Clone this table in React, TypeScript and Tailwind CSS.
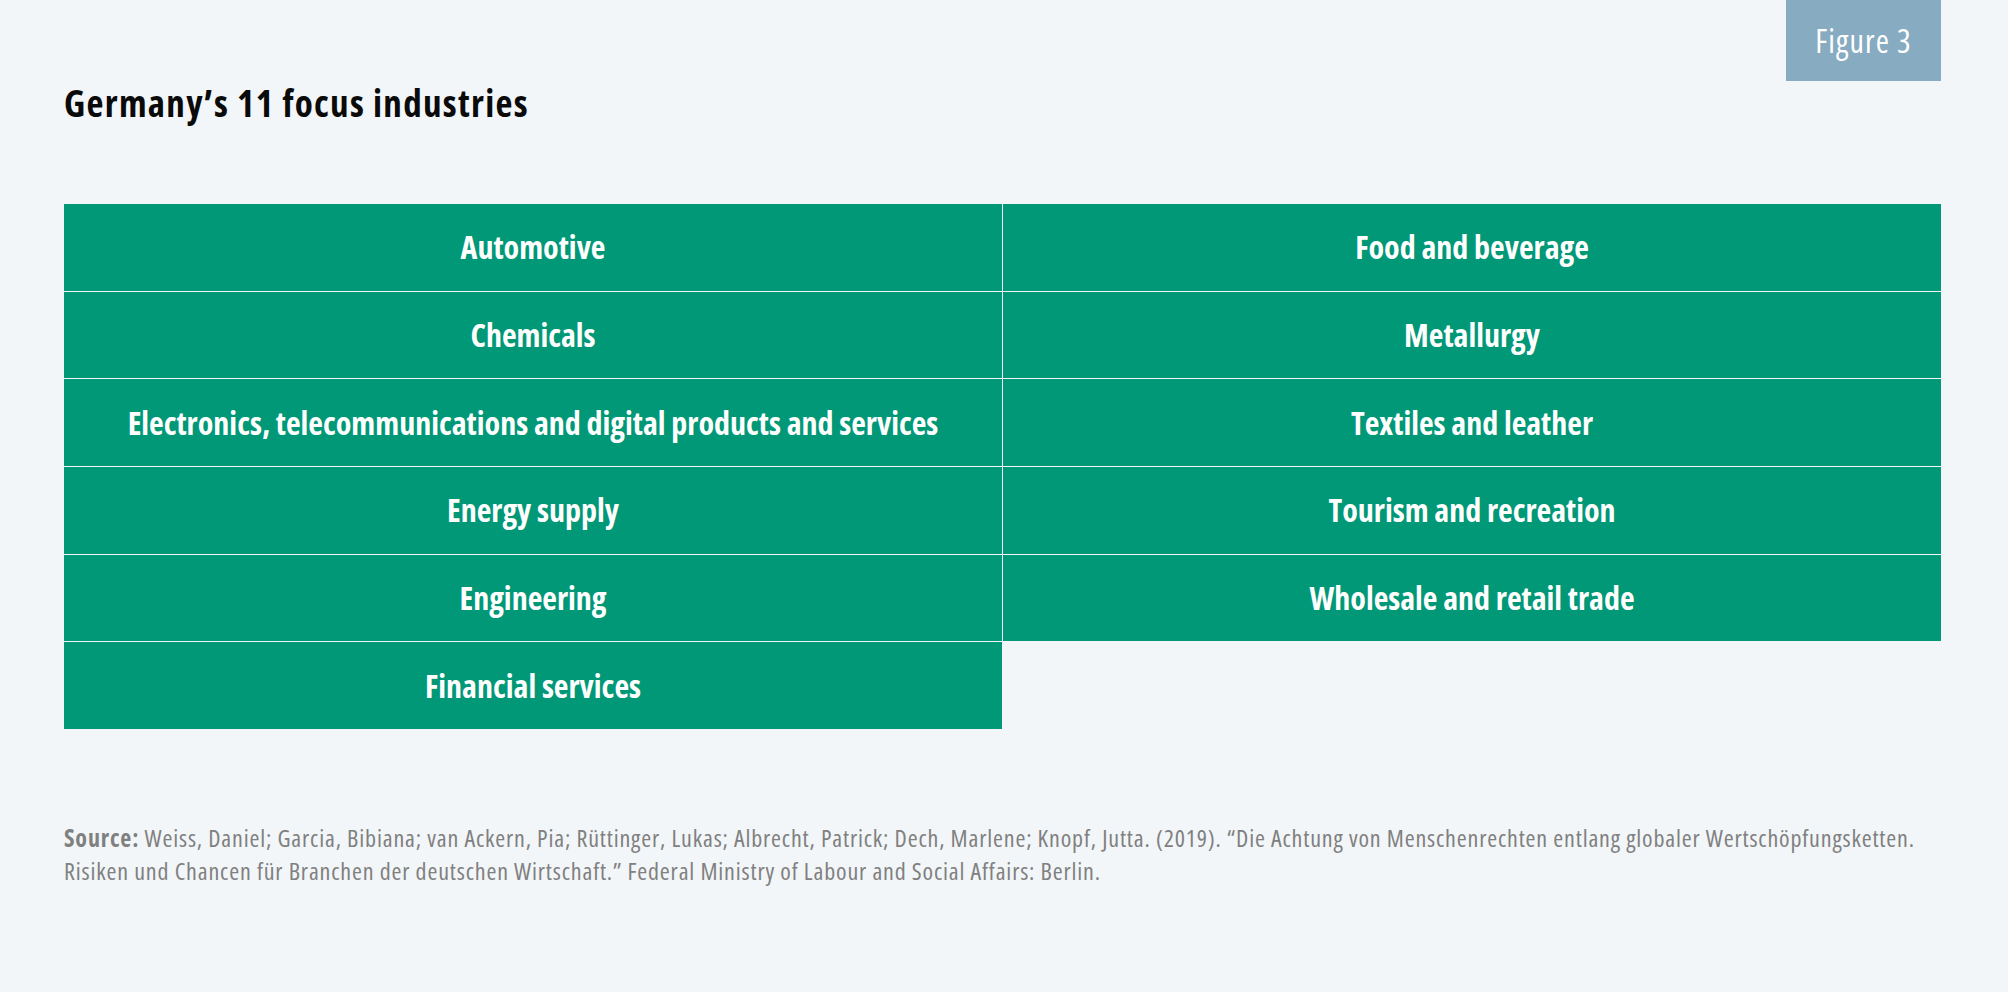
import React from 'react';

// two columns of the figure, read top to bottom
const leftColumn = [
  'Automotive',
  'Chemicals',
  'Electronics, telecommunications and digital products and services',
  'Energy supply',
  'Engineering',
  'Financial services',
];
const rightColumn = [
  'Food and beverage',
  'Metallurgy',
  'Textiles and leather',
  'Tourism and recreation',
  'Wholesale and retail trade',
];

export default function App() {
  // interleave so the grid fills row by row
  const cells: (string | null)[] = [];
  for (let i = 0; i < leftColumn.length; i++) {
    cells.push(leftColumn[i]);
    cells.push(rightColumn[i] ?? null);
  }

  return (
    <div className="w-[2008px] h-[992px] bg-[#f2f6f9] overflow-hidden font-['Open_Sans',sans-serif] [font-stretch:condensed]">
      {/* Figure badge */}
      <div className="flex justify-end pr-[67px]">
        <div className="w-[155px] h-[81px] bg-[#87abc0] flex items-center justify-center text-white text-[32px] tracking-[1.1px]">
          Figure 3
        </div>
      </div>

      <div className="px-[64px]">
        <h1 className="mt-[2px] text-[37px] leading-[40px] font-bold text-[#0a0a0a] tracking-[1.3px]">
          Germany’s 11 focus industries
        </h1>

        {/* Industries table */}
        <div className="mt-[81px] w-[1877px] grid grid-cols-2 gap-px">
          {cells.map((label, i) =>
            label ? (
              <div
                key={i}
                className="h-[86.7px] bg-[#009876] flex items-center justify-center text-white text-[32px] font-bold"
              >
                {label}
              </div>
            ) : (
              <div key={i} />
            )
          )}
        </div>

        <p className="mt-[92px] w-[1877px] text-[24px] leading-[33px] tracking-[0.84px] text-[#808080]">
          <span className="font-bold">Source:</span> Weiss, Daniel; Garcia, Bibiana; van Ackern, Pia; Rüttinger, Lukas; Albrecht, Patrick; Dech, Marlene; Knopf, Jutta. (2019). “Die Achtung von Menschenrechten entlang globaler Wertschöpfungsketten.
          <br />
          Risiken und Chancen für Branchen der deutschen Wirtschaft.” Federal Ministry of Labour and Social Affairs: Berlin.
        </p>
      </div>
    </div>
  );
}
